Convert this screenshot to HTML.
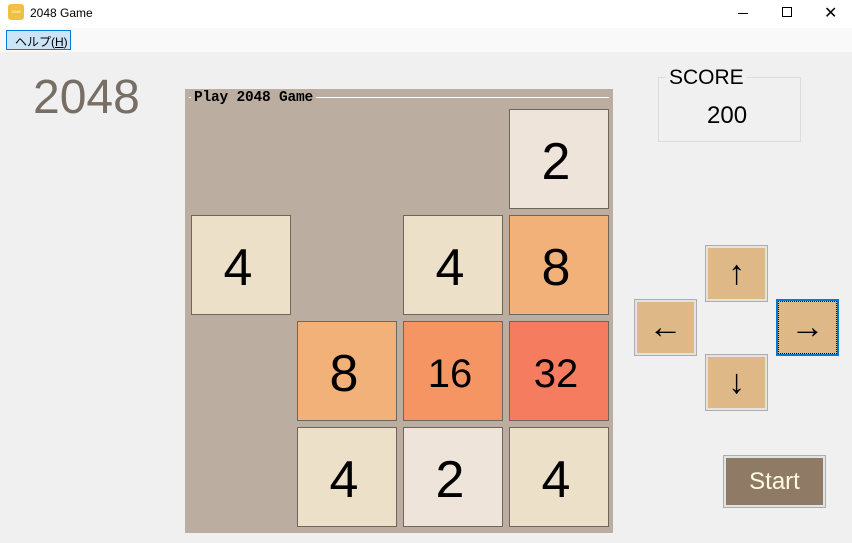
<!DOCTYPE html>
<html><head><meta charset="utf-8"><style>
*{margin:0;padding:0;box-sizing:border-box}
body{width:852px;height:543px;background:#f0f0f0;position:relative;overflow:hidden;font-family:"Liberation Sans","Noto Sans CJK JP",sans-serif}
.abs{position:absolute}
.tile{position:absolute;width:100px;height:100px;border:1px solid #6e655c;display:flex;align-items:center;justify-content:center;font-size:52px;color:#000;padding:6px 6px 0 0}
.btn{position:absolute;width:63px;height:57px;background:#deb887;border:3px solid #e3e3e3;outline:1px solid #adadad;outline-offset:-1px;display:flex;align-items:center;justify-content:center;font-size:34px}
</style></head><body>
<div class="abs" style="left:0;top:0;width:852px;height:28px;background:#fff"></div>
<div class="abs" style="left:8px;top:4px;width:16px;height:16px;background:#f0c040;border-radius:3px;color:#fff;font-size:4px;line-height:16px;text-align:center">2048</div>
<div class="abs" style="left:30px;top:6px;font-size:12px;color:#000">2048 Game</div>
<div class="abs" style="left:738px;top:13px;width:10px;height:1px;background:#000"></div>
<div class="abs" style="left:782px;top:7px;width:10px;height:10px;border:1px solid #000"></div>
<div class="abs" style="left:824px;top:3px;font-size:16px;color:#000">✕</div>
<div class="abs" style="left:0;top:28px;width:852px;height:24px;background:#f9f9f9"></div>
<div class="abs" style="left:6px;top:30px;width:65px;height:20px;background:#cce4f7;border:1px solid #0078d7;font-size:12px;padding:2px 0 0 8px">ヘルプ(<u>H</u>)</div>
<div class="abs" style="left:33px;top:70px;font-size:48px;color:#776e65;line-height:56px">2048</div>
<div class="abs" style="left:185px;top:89px;width:428px;height:444px;background:#bbada0"></div>
<div class="abs" style="left:189px;top:97px;width:420px;height:1px;background:#fff"></div>
<div class="abs" style="left:191px;top:90px;background:#bbada0;padding:0 3px;font-family:'Liberation Mono',monospace;font-size:14.5px;font-weight:bold;color:#000;letter-spacing:-0.2px">Play 2048 Game</div>
<div class="tile" style="left:509px;top:109px;background:#eee4da">2</div>
<div class="tile" style="left:191px;top:215px;background:#ede0c8">4</div>
<div class="tile" style="left:403px;top:215px;background:#ede0c8">4</div>
<div class="tile" style="left:509px;top:215px;background:#f2b179">8</div>
<div class="tile" style="left:297px;top:321px;background:#f2b179">8</div>
<div class="tile" style="left:403px;top:321px;background:#f59563;font-size:40px">16</div>
<div class="tile" style="left:509px;top:321px;background:#f67c5f;font-size:40px">32</div>
<div class="tile" style="left:297px;top:427px;background:#ede0c8">4</div>
<div class="tile" style="left:403px;top:427px;background:#eee4da">2</div>
<div class="tile" style="left:509px;top:427px;background:#ede0c8">4</div>
<div class="abs" style="left:658px;top:77px;width:143px;height:65px;border:1px solid #dcdcdc"></div>
<div class="abs" style="left:666px;top:66px;background:#f0f0f0;padding:0 3px;font-size:21px">SCORE</div>
<div class="abs" style="left:707px;top:102px;font-size:24px">200</div>
<div class="btn" style="left:705px;top:245px">↑</div>
<div class="btn" style="left:634px;top:299px">←</div>
<div class="btn" style="left:776px;top:299px;border:2px solid #0078d7;outline:1px dotted #000;outline-offset:-3px">→</div>
<div class="btn" style="left:705px;top:354px">↓</div>
<div class="abs" style="left:723px;top:455px;width:103px;height:53px;background:#8f7a66;border:3px solid #e3e3e3;outline:1px solid #adadad;outline-offset:-1px;color:#fffbe0;font-size:24px;display:flex;align-items:center;justify-content:center">Start</div>
</body></html>
